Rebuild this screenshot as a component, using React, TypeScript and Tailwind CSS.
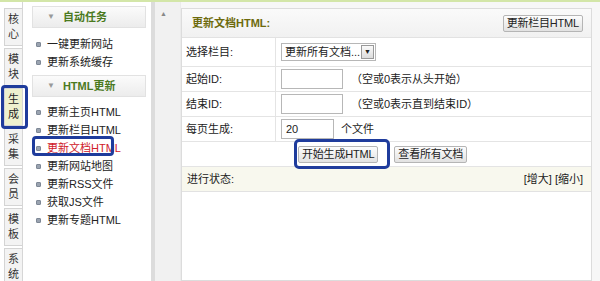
import React from "react";

const tabs = ["核心", "模块", "生成", "采集", "会员", "模板", "系统"];

const autoItems = ["一键更新网站", "更新系统缓存"];
const htmlItems = [
  "更新主页HTML",
  "更新栏目HTML",
  "更新文档HTML",
  "更新网站地图",
  "更新RSS文件",
  "获取JS文件",
  "更新专题HTML",
];

const font = "font-['Liberation_Sans','Noto_Sans_CJK_SC',sans-serif]";

const MenuHeader = ({ title }: { title: string }) => (
  <div className="ml-[9px] mr-[5px] h-[22px] flex items-center border border-[#e2e2e2] bg-gradient-to-b from-[#fbfbfb] to-[#ececec]">
    <span className="ml-[14px] text-[8px] text-[#999]">▼</span>
    <span className="ml-[8px] text-[11px] leading-[14px] font-bold text-[#4b7a1e]">{title}</span>
  </div>
);

const MenuItem = ({ label, active }: { label: string; active?: boolean }) => (
  <div className="h-[18px] flex items-center pl-[13px]">
    <span className="w-[5px] h-[5px] rounded-[1px] bg-[#9aa3b0] border border-[#7e8896]" />
    <span className={`ml-[6px] text-[11px] leading-[14px] ${active ? "text-[#d0202a]" : "text-[#222]"}`}>
      {label}
    </span>
  </div>
);

const Row = ({ label, children }: { label: string; children: React.ReactNode }) => (
  <div className="h-[25px] flex border-b border-[#e4e4e4]">
    <div className="w-[94px] shrink-0 border-r border-[#e4e4e4] pl-[4px] flex items-center text-[11px] text-[#222]">
      {label}
    </div>
    <div className="flex-1 flex items-center pl-[5px]">{children}</div>
  </div>
);

const Btn = ({ children }: { children: React.ReactNode }) => (
  <button className="h-[17px] px-[3px] text-[11px] leading-none tracking-[-0.2px] text-[#222] bg-gradient-to-b from-[#fdfdfd] to-[#e2e2e2] border border-[#b5b5b5] rounded-[2px]">
    {children}
  </button>
);

export default function App() {
  return (
    <div className={`relative w-[600px] h-[281px] overflow-hidden bg-white ${font}`}>
      <div className="h-[2px] bg-[#d3e6a8]" />
      <div className="flex h-[279px]">
        {/* tab column */}
        <div className="w-[23px] shrink-0 pl-[4px] pt-[6px] border-r border-[#d6d6d6] bg-white flex flex-col gap-[2px]">
          {tabs.map((t) => (
            <div
              key={t}
              className={`h-[38px] shrink-0 flex flex-col items-center justify-center text-[11px] border border-r-0 border-[#d4d4d4] ${
                t === "生成" ? "bg-[#eef1cf] text-[#222]" : "bg-[#f3f3f3] text-[#333]"
              }`}
            >
              <span className="block leading-[15px]">{t[0]}</span>
              <span className="block leading-[15px]">{t[1]}</span>
            </div>
          ))}
        </div>

        {/* menu */}
        <div className="w-[128px] shrink-0 bg-white pt-[4px]">
          <MenuHeader title="自动任务" />
          <div className="pt-[7px] pb-[4px]">
            {autoItems.map((i) => (
              <MenuItem key={i} label={i} />
            ))}
          </div>
          <MenuHeader title="HTML更新" />
          <div className="pt-[6px]">
            {htmlItems.map((i) => (
              <MenuItem key={i} label={i} active={i === "更新文档HTML"} />
            ))}
          </div>
        </div>

        {/* splitter */}
        <div className="w-[4px] shrink-0 bg-[#dcdcdc]" />
        <div className="w-[26px] shrink-0 bg-[#f1f1f1] border-r border-[#ebebeb] flex pl-[5px] pt-[8px]">
          <span className="text-[7px] leading-[8px] text-[#888]">▲</span>
        </div>

        {/* main */}
        <div className="flex-1 bg-[#f7f7f7] pt-[6px] pr-[8px]">
          <div className="h-full bg-white border border-[#dcdcdc]">
            <div className="h-[29px] flex items-center justify-between border-b border-[#e2e2e2] bg-gradient-to-b from-[#fafafa] to-[#f1f1f1] pl-[10px] pr-[8px]">
              <span className="text-[11px] font-bold text-[#6d6a0c]">更新文档HTML:</span>
              <Btn>更新栏目HTML</Btn>
            </div>
            <div className="h-[29px] flex border-b border-[#e4e4e4]">
              <div className="w-[94px] shrink-0 border-r border-[#e4e4e4] pl-[4px] flex items-center text-[11px] text-[#222]">
                选择栏目:
              </div>
              <div className="flex-1 flex items-center pl-[5px]">
                <div className="h-[18px] w-[95px] flex items-center border border-[#b7b7b7] bg-white">
                  <span className="flex-1 pl-[3px] text-[11px] leading-[14px] text-[#222] whitespace-nowrap overflow-hidden">
                    更新所有文档...
                  </span>
                  <span className="w-[13px] h-[14px] mr-[1px] shrink-0 flex items-center justify-center border border-[#999] bg-gradient-to-b from-[#fafafa] to-[#dcdcdc] text-[7px] text-[#222]">
                    ▼
                  </span>
                </div>
              </div>
            </div>
            <Row label="起始ID:">
              <div className="w-[62px] h-[20px] border border-[#b7b7b7] bg-white" />
              <span className="ml-[8px] text-[11px] text-[#222]">（空或0表示从头开始）</span>
            </Row>
            <Row label="结束ID:">
              <div className="w-[62px] h-[20px] border border-[#b7b7b7] bg-white" />
              <span className="ml-[8px] text-[11px] text-[#222]">（空或0表示直到结束ID）</span>
            </Row>
            <Row label="每页生成:">
              <div className="w-[53px] h-[20px] border border-[#b7b7b7] bg-white flex items-center pl-[4px] text-[11px] text-[#222]">
                20
              </div>
              <span className="ml-[7px] text-[11px] text-[#222]">个文件</span>
            </Row>
            <div className="h-[25px] flex items-center pl-[116px] gap-[16px] border-b border-[#e4e4e4]">
              <Btn>开始生成HTML</Btn>
              <Btn>查看所有文档</Btn>
            </div>
            <div className="h-[25px] flex items-center justify-between bg-[#f8f8ee] border-b border-[#e2e2e2] pl-[5px] pr-[8px] text-[11px] text-[#222]">
              <span>进行状态:</span>
              <span>[增大] [缩小]</span>
            </div>
          </div>
        </div>
      </div>

      {/* annotation boxes */}
      <div className="absolute left-[1px] top-[85px] w-[27px] h-[44px] border-[3px] border-[#1f3c9c] rounded-[4px]" />
      <div className="absolute left-[32px] top-[136px] w-[82px] h-[20px] border-[3px] border-[#1f3c9c] rounded-[4px]" />
      <div className="absolute left-[294px] top-[139px] w-[96px] h-[30px] border-[3px] border-[#1f3c9c] rounded-[5px]" />
    </div>
  );
}
